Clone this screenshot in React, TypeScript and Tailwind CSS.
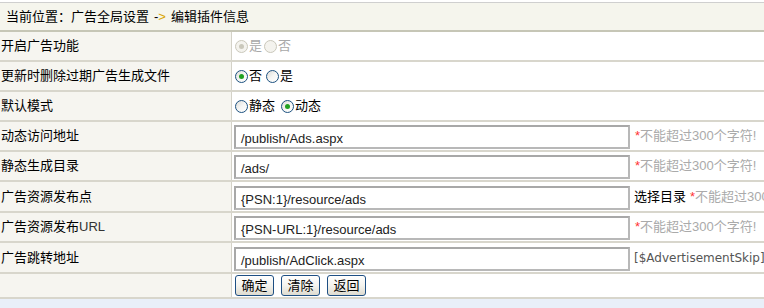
import React from "react";

const CJK = "font-['Arial','Liberation_Sans','Noto_Sans_CJK_SC',sans-serif]";

function Radio({ checked, disabled }: { checked?: boolean; disabled?: boolean }) {
  const border = disabled ? "border-[#cac8bb]" : "border-[#1c5180]";
  const bg = disabled ? "bg-[#f4f3ee]" : "bg-gradient-to-br from-[#dcdcd7] via-[#f6f6f4] to-white";
  return (
    <span className={`relative inline-flex items-center justify-center w-[13px] h-[13px] rounded-full border ${border} ${bg} mx-[1px] shrink-0`}>
      {checked && (
        <span className={`w-[5px] h-[5px] rounded-full ${disabled ? "bg-[#cac8bb]" : "bg-[#21a121]"}`} />
      )}
    </span>
  );
}

function Row({ label, children, h = "h-[30px]" }: { label: React.ReactNode; children?: React.ReactNode; h?: string }) {
  return (
    <div className={`flex ${h} border-b-2 border-[#d8d6cc]`}>
      <div className="w-[232px] shrink-0 bg-[#f6f5f0] border-r border-[#d4d2c8] flex items-center pl-[1px] text-[13px] text-black">
        {label}
      </div>
      <div className="flex-1 bg-white flex items-center pl-[2px] text-[13px] whitespace-nowrap overflow-hidden">
        {children}
      </div>
    </div>
  );
}

function TextBox({ value }: { value: string }) {
  return (
    <div className="w-[396px] h-[24px] mt-[2px] shrink-0 border-2 border-[#b8b8b8] border-t-[#a8a8a8] border-l-[#a8a8a8] bg-white flex items-end pl-[5px] pb-0 font-['Arial','Liberation_Sans',sans-serif] text-[13px] leading-[16px] text-[#222]">
      {value}
    </div>
  );
}

function Hint({ ml = "ml-[5px]" }: { ml?: string }) {
  return (
    <span className={`${ml} text-[13px] text-[#aaaaaa]`}>
      <span className="text-[#ff3333]">*</span>不能超过300个字符!
    </span>
  );
}

function Btn({ children }: { children: React.ReactNode }) {
  return (
    <button className="w-[39px] h-[21px] border border-[#1e4f83] rounded-[3px] bg-gradient-to-b from-white via-[#f4f3ee] to-[#dedbd0] text-[13px] leading-[17px] text-black flex items-center justify-center">
      {children}
    </button>
  );
}

export default function App() {
  return (
    <div className={`w-[764px] h-[308px] bg-[#e9eff9] overflow-hidden ${CJK} text-black`}>
      <div className="h-[2px] bg-white" />
      <div className="h-[30px] border-t border-[#cfcfcf] border-b-2 border-b-[#c6c6b6] bg-[#f5f5ed] flex items-center pl-[6px] text-[13px]">
        当前位置：广告全局设置 <span className="mx-[5px]">-<span className="text-[#d9a400]">&gt;</span></span> 编辑插件信息
      </div>
      <Row label="开启广告功能">
        <label className="flex items-center text-[#a8a8a8]"><Radio checked disabled />是</label>
        <label className="flex items-center text-[#a8a8a8] ml-[1px]"><Radio disabled />否</label>
      </Row>
      <Row label="更新时删除过期广告生成文件">
        <label className="flex items-center"><Radio checked />否</label>
        <label className="flex items-center ml-[3px]"><Radio />是</label>
      </Row>
      <Row label="默认模式">
        <label className="flex items-center"><Radio />静态</label>
        <label className="flex items-center ml-[5px]"><Radio checked />动态</label>
      </Row>
      <Row label="动态访问地址">
        <TextBox value="/publish/Ads.aspx" />
        <Hint />
      </Row>
      <Row label="静态生成目录">
        <TextBox value="/ads/" />
        <Hint />
      </Row>
      <Row label="广告资源发布点" h="h-[31px]">
        <TextBox value="{PSN:1}/resource/ads" />
        <span className="ml-[4px]">选择目录</span>
        <Hint ml="ml-[4px]" />
      </Row>
      <Row label={<>广告资源发布<span className="text-[#333]">URL</span></>}>
        <TextBox value="{PSN-URL:1}/resource/ads" />
        <Hint />
      </Row>
      <Row label="广告跳转地址" h="h-[31px]">
        <TextBox value="/publish/AdClick.aspx" />
        <span className="ml-[4px] font-['DejaVu_Sans',sans-serif] text-[12px] text-[#555]">[$AdvertisementSkip]</span>
      </Row>
      <Row label="" h="h-[25px]">
        <div className="flex gap-[7px] pl-[1px]">
          <Btn>确定</Btn>
          <Btn>清除</Btn>
          <Btn>返回</Btn>
        </div>
      </Row>
    </div>
  );
}
